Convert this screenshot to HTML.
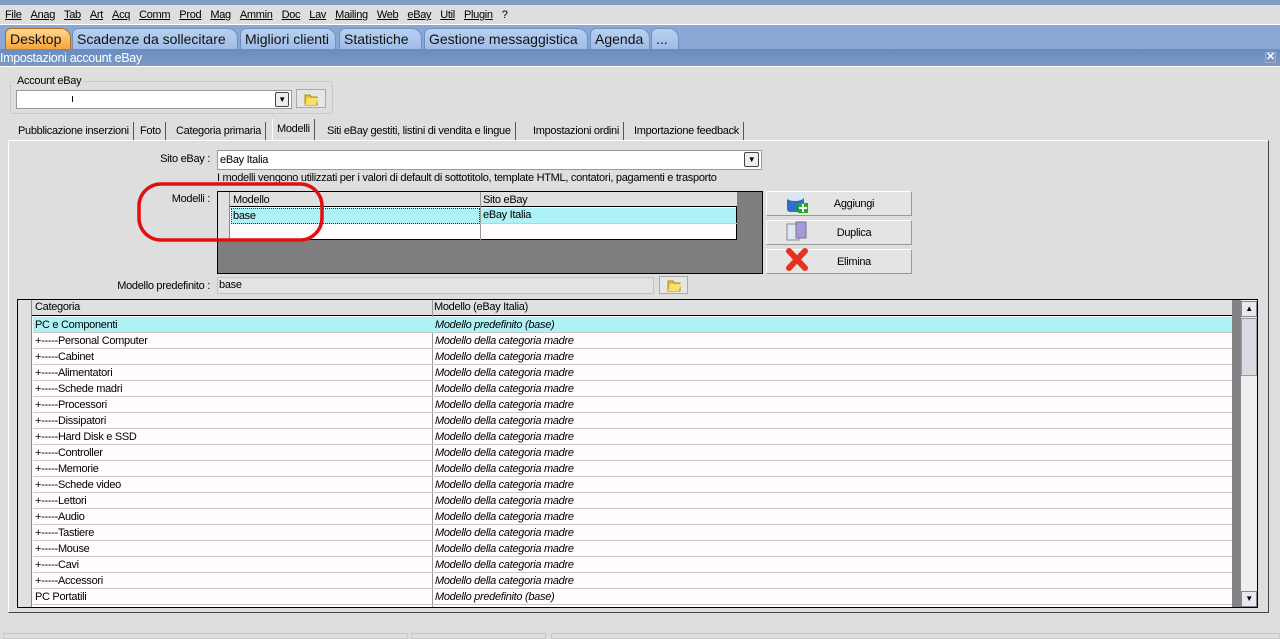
<!DOCTYPE html>
<html><head><meta charset="utf-8"><style>
*{margin:0;padding:0;box-sizing:border-box}
body{width:1280px;height:637px;overflow:hidden;background:#dedede;font-family:"Liberation Sans",sans-serif;font-size:11px;color:#000;position:relative;letter-spacing:-0.3px}
.a{position:absolute}
.menu span{margin-right:9px;text-decoration:underline;text-decoration-thickness:1px}
.tab{position:absolute;top:28px;height:21px;background:linear-gradient(#b9d0f0,#9ebde8);border:1px solid #6f8fbf;border-bottom:none;border-radius:6px 10px 0 0;font-size:14px;padding:2px 4px;color:#111;letter-spacing:0}
.st{position:absolute;top:122px;height:18px;border-right:1px solid #555;padding:3px 4px;font-size:11px}
.cell{position:absolute;height:16px;border-bottom:1px solid #c8c8c8;padding:1px 3px;white-space:nowrap}
.btn{position:absolute;left:766px;width:146px;height:25px;background:#e4e4e4;border:1px solid #fff;border-right-color:#999;border-bottom-color:#999;text-align:center;padding-top:6px;padding-left:30px}
.fold{position:absolute;background:#e6e6e6;border:1px solid #aaa}
</style></head><body>
<div class="a" style="left:0;top:0;width:1280px;height:5px;background:#7f9fc6"></div>
<div class="a menu" style="left:5px;top:9px;white-space:nowrap"><span>File</span><span>Anag</span><span>Tab</span><span>Art</span><span>Acq</span><span>Comm</span><span>Prod</span><span>Mag</span><span>Ammin</span><span>Doc</span><span>Lav</span><span>Mailing</span><span>Web</span><span>eBay</span><span>Util</span><span>Plugin</span><span style="text-decoration:none">?</span></div>
<div class="a" style="left:0;top:24px;width:1280px;height:25px;background:#8aa8d6;border-top:1px solid #fff"></div>
<div class="tab" style="left:5px;width:66px;background:linear-gradient(#ffd890,#f5a43a);border-color:#b07020">Desktop</div>
<div class="tab" style="left:72px;width:166px">Scadenze da sollecitare</div>
<div class="tab" style="left:240px;width:96px">Migliori clienti</div>
<div class="tab" style="left:339px;width:83px">Statistiche</div>
<div class="tab" style="left:424px;width:164px">Gestione messaggistica</div>
<div class="tab" style="left:590px;width:60px">Agenda</div>
<div class="tab" style="left:651px;width:28px">...</div>
<div class="a" style="left:0;top:49px;width:1280px;height:18px;background:linear-gradient(#6a8cc0,#7a9ac2);color:#fff;font-size:12.5px;padding:2px 0;border-bottom:1px solid #fff">Impostazioni account eBay</div>
<div class="a" style="left:1265px;top:52px;width:11px;height:11px;border:1px solid #aac;color:#fff;font-size:11px;line-height:9px;text-align:center;font-weight:bold">✕</div>
<div class="a" style="left:10px;top:81px;width:323px;height:33px;border:1px solid #c8c8c8;border-radius:3px"></div>
<div class="a" style="left:15px;top:75px;background:#dedede;padding:0 2px">Account eBay</div>
<div class="a" style="left:16px;top:90px;width:276px;height:19px;background:#fff;border:1px solid #999;padding:2px 0 0 54px">ı</div>
<div class="a" style="left:275px;top:92px;width:14px;height:15px;background:#eee;border:1px solid #444;border-radius:2px;font-size:8px;text-align:center;line-height:13px">▼</div>
<div class="fold" style="left:296px;top:89px;width:30px;height:19px"><svg width="28" height="17"><path d="M8 5h5l1 2h6v8H8z" fill="#e8c030" stroke="#b08a10"/><path d="M10 8h11l-2 7H8z" fill="#f8e070"/></svg></div>
<div class="st" style="left:14px">Pubblicazione inserzioni</div>
<div class="st" style="left:136px">Foto</div>
<div class="st" style="left:172px">Categoria primaria</div>
<div class="st" style="left:272px;top:119px;height:21px;background:#dedede;border-left:1px solid #fff;padding-top:4px">Modelli</div>
<div class="st" style="left:323px">Siti eBay gestiti, listini di vendita e lingue</div>
<div class="st" style="left:529px">Impostazioni ordini</div>
<div class="st" style="left:630px">Importazione feedback</div>
<div class="a" style="left:8px;top:140px;width:1261px;height:473px;border:1px solid #fff;border-right:1px solid #444;border-bottom:1px solid #444"></div>
<div class="a" style="left:100px;top:153px;width:110px;text-align:right">Sito eBay :</div>
<div class="a" style="left:217px;top:150px;width:545px;height:20px;background:#fff;border:1px solid #999;padding:3px 2px">eBay Italia</div>
<div class="a" style="left:744px;top:152px;width:15px;height:15px;background:#eee;border:1px solid #444;border-radius:2px;font-size:8px;text-align:center;line-height:13px">▼</div>
<div class="a" style="left:217px;top:172px">I modelli vengono utilizzati per i valori di default di sottotitolo, template HTML, contatori, pagamenti e trasporto</div>
<div class="a" style="left:100px;top:193px;width:110px;text-align:right">Modelli :</div>
<div class="a" style="left:217px;top:191px;width:546px;height:83px;background:#807d80;border:1px solid #000"></div>
<div class="a" style="left:218px;top:192px;width:519px;height:48px;background:#fffbff;border:1px solid #000"></div>
<div class="a" style="left:218px;top:192px;width:519px;height:15px;background:#e0e0e0;border-bottom:1px solid #000"></div>
<div class="a" style="left:218px;top:192px;width:12px;height:48px;background:#e0e0e0;border-right:1px solid #888"></div>
<div class="a" style="left:231px;top:208px;width:505px;height:16px;background:#aef2f6"></div>
<div class="a" style="left:480px;top:192px;width:1px;height:48px;background:#999"></div>
<div class="a" style="left:231px;top:223px;width:506px;height:1px;background:#ccc"></div>
<div class="a" style="left:233px;top:194px">Modello</div>
<div class="a" style="left:483px;top:194px">Sito eBay</div>
<div class="a" style="left:231px;top:208px;width:249px;height:16px;border:1px dotted #333;padding:1px 1px">base</div>
<div class="a" style="left:483px;top:209px">eBay Italia</div>
<div class="btn" style="top:191px">Aggiungi</div>
<div class="btn" style="top:220px">Duplica</div>
<div class="btn" style="top:249px">Elimina</div>
<svg class="a" style="left:785px;top:191px" width="28" height="85"><rect x="2" y="5" width="17" height="16" rx="3" fill="#2c70c8"/><ellipse cx="10" cy="6" rx="9" ry="4" fill="#d8e8f8"/><rect x="13" y="12" width="10" height="10" fill="#2a2"/><path d="M18 13v8M14 17h8" stroke="#fff" stroke-width="2"/><rect x="2" y="33" width="12" height="16" fill="#dde8f4" stroke="#889"/><rect x="11" y="31" width="10" height="16" fill="#a898d8" stroke="#778"/><path d="M4 60l16 17M20 60l-16 17" stroke="#e83020" stroke-width="6" stroke-linecap="round"/></svg>
<div class="a" style="left:20px;top:280px;width:190px;text-align:right">Modello predefinito :</div>
<div class="a" style="left:217px;top:277px;width:437px;height:17px;background:#e4e4e4;border:1px solid #c4c4c4;padding:1px 1px">base</div>
<div class="fold" style="left:659px;top:276px;width:29px;height:18px"><svg width="27" height="16"><path d="M8 4h5l1 2h6v8H8z" fill="#e8c030" stroke="#b08a10"/><path d="M10 7h11l-2 7H8z" fill="#f8e070"/></svg></div>
<div class="a" style="left:17px;top:299px;width:1241px;height:309px;border:1px solid #000;background:#fffbff;overflow:hidden">
<div class="a" style="left:0;top:0;width:1214px;height:16px;background:#e0e0e0;border-bottom:1px solid #000"></div>
<div class="a" style="left:0;top:0;width:14px;height:309px;background:#e0e0e0;border-right:1px solid #888"></div>
<div class="a" style="left:17px;top:1px">Categoria</div>
<div class="a" style="left:416px;top:1px">Modello (eBay Italia)</div>
<div class="a" style="left:414px;top:0;width:1px;height:309px;background:#999"></div>
<div class="a" style="left:1214px;top:0;width:8px;height:309px;background:#858285"></div>
<div class="a" style="left:1222px;top:0;width:17px;height:309px;background:#eee;border-left:1px solid #888"></div>
<div class="a" style="left:1223px;top:1px;width:16px;height:16px;background:#e8e8f0;border:1px solid #888;font-size:8px;text-align:center;line-height:14px">▲</div>
<div class="a" style="left:1223px;top:18px;width:16px;height:58px;background:#dadae2;border:1px solid #999"></div>
<div class="a" style="left:1223px;top:291px;width:16px;height:16px;background:#e8e8f0;border:1px solid #888;font-size:8px;text-align:center;line-height:14px">▼</div>
<div id="rows"></div>
</div>
<script>
var c=["PC e Componenti","+-----Personal Computer","+-----Cabinet","+-----Alimentatori","+-----Schede madri","+-----Processori","+-----Dissipatori","+-----Hard Disk e SSD","+-----Controller","+-----Memorie","+-----Schede video","+-----Lettori","+-----Audio","+-----Tastiere","+-----Mouse","+-----Cavi","+-----Accessori","PC Portatili"];
var h="";for(var i=0;i<c.length;i++){var t=17+i*16;var bg=i==0?"background:#aef2f6;":"";var m=(i==0||i==17)?"Modello predefinito (base)":"Modello della categoria madre";
h+='<div class="cell" style="'+bg+'left:15px;top:'+t+'px;width:1199px"></div><div class="a" style="left:17px;top:'+(t+2)+'px">'+c[i]+'</div><div class="a" style="left:417px;top:'+(t+2)+'px;font-style:italic">'+m+'</div>';}
document.getElementById("rows").innerHTML=h;
</script>
<div class="a" style="left:3px;top:633px;width:405px;height:6px;border:1px solid #c8c8c8"></div>
<div class="a" style="left:411px;top:633px;width:135px;height:6px;border:1px solid #c8c8c8"></div>
<div class="a" style="left:551px;top:633px;width:729px;height:6px;border:1px solid #c8c8c8"></div>
<svg class="a" style="left:135px;top:181px" width="192" height="64"><rect x="4" y="3" width="183" height="56" rx="22" fill="none" stroke="#e01010" stroke-width="3.5"/></svg>
</body></html>
